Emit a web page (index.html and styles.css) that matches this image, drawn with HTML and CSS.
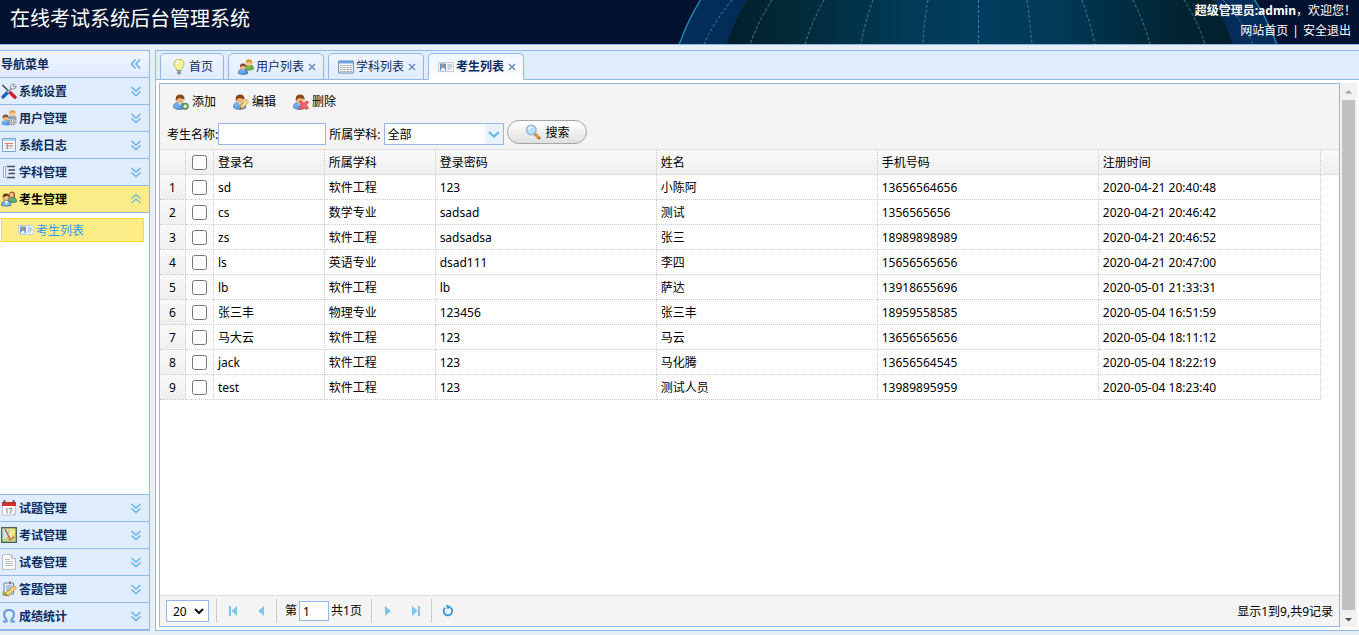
FILE: index.html
```html
<!DOCTYPE html>
<html lang="zh-CN">
<head>
<meta charset="utf-8">
<title>在线考试系统后台管理系统</title>
<link rel="stylesheet" href="styles.css">
</head>
<body>
<svg class="defs" aria-hidden="true">
  <defs>
    <linearGradient id="sea" x1="0" x2="1"><stop offset="0" stop-color="#021f2b"/><stop offset=".12" stop-color="#022836"/><stop offset=".35" stop-color="#013a55"/><stop offset=".5" stop-color="#023d5f"/><stop offset=".65" stop-color="#013a58"/><stop offset=".88" stop-color="#022433"/><stop offset="1" stop-color="#021f2b"/></linearGradient>
    <linearGradient id="blueShirt" x1="0" x2="1" y2="1"><stop offset="0" stop-color="#8ec4f6"/><stop offset="1" stop-color="#3a86dc"/></linearGradient>
  </defs>
  <symbol id="person" viewBox="0 0 16 16"><path d="M.5 13.500q-.2-4.500 4-5h4q4 .5 4.500 5Q10 15.500 6.500 15.500T.5 13.500z" fill="url(#blueShirt)" stroke="#3a74bd" stroke-width=".8"/><path d="M5.500 9l1.400 2 1.400-2z" fill="#e8f3ff"/><ellipse cx="7" cy="5.800" rx="3.600" ry="3.600" fill="#f0b67c"/><path d="M2.700 6.500Q2 .4 7 .4T11.500 6.200l-1.200-1.500q-2.500.2-3.800-1Q5.500 5 4 5l-.4 2z" fill="#85461b"/></symbol>
  <symbol id="add" viewBox="0 0 16 16"><use href="#person"/><circle cx="12.300" cy="12.300" r="3.200" fill="#68a957" stroke="#3d8232" stroke-width=".7"/><path d="M10.500 12.300h3.600M12.300 10.500v3.600" stroke="#fff" stroke-width="1.300"/></symbol>
  <symbol id="edit" viewBox="0 0 16 16"><use href="#person"/><path d="M7 15l.8-3.500L13 5.500l2.500 2.300-5.300 6z" fill="#ffd66b" stroke="#d08f30" stroke-width=".8"/><path d="M7 15l.5-2 1.400 1.300z" fill="#444"/><path d="M9 12.500l5-5.500" stroke="#fff2b8"/></symbol>
  <symbol id="remove" viewBox="0 0 16 16"><use href="#person"/><path d="M6 7.500l2.500-.5 2.300 2.300L13 7l2.700.8-2.200 3.200 2.200 3.300-2.700 1.200-2.200-2.300-2.300 2.300-2.700-1 2.400-3.500z" fill="#f66363" stroke="#dc4043" stroke-width=".7"/></symbol>
  <symbol id="users" viewBox="0 0 16 16"><path d="M7 9.500q0-3.500 3-3.500h2.500q3 0 3 4-3 1.500-6 1z" fill="#76b843" stroke="#3f8622" stroke-width=".7"/><circle cx="11" cy="3.700" r="3" fill="#f8c893"/><path d="M7.800 4Q7.500.3 11 .3T14.300 4l-.7 1-1-2-2.600.2z" fill="#e09a20"/><path d="M.3 14.500q0-4 3-4.500h3.400q3 .4 3 4.500-4 2.200-9.400 0z" fill="url(#blueShirt)" stroke="#2c6ab6" stroke-width=".7"/><circle cx="5" cy="8" r="2.800" fill="#efb681"/><path d="M2 8.500Q1.500 4.600 5 4.600T8.100 8l-1-.8L4 7z" fill="#88502a"/></symbol>
  <symbol id="usergear" viewBox="0 0 16 16"><path d="M7 9q0-3.500 3-3.500h3q2.500 0 2.500 4z" fill="#7aa3cf"/><circle cx="11.500" cy="3.500" r="3" fill="#f8c893"/><path d="M8 4Q8 .2 11.500.2T15 4l-1-1.500-4 .3z" fill="#e3a043"/><path d="M.3 14.500q0-4 3-4.500h3.400q3 .2 3 4.500-4 2-9.400 0z" fill="url(#blueShirt)"/><circle cx="4.500" cy="8" r="2.700" fill="#efb681"/><path d="M1.600 8.500Q1 4.600 4.500 4.600T7.600 8l-1-.8-3-.2z" fill="#88502a"/><circle cx="11.500" cy="11.300" r="3.300" fill="#d9d9d9" stroke="#959595" stroke-width="1.800" stroke-dasharray="1.700 .8"/><circle cx="11.500" cy="11.300" r="1.400" fill="#fff" stroke="#777" stroke-width=".8"/></symbol>
  <symbol id="group" viewBox="0 0 16 16"><path d="M7.500 9q0-3 3-3H12q3.500 0 3.500 5-4 1-7 0z" fill="#5eac77" stroke="#347b4a" stroke-width=".7"/><path d="M8 6V3q.3-2.600 3-2.600T14 3v3.800h-2z" fill="#a45724"/><circle cx="10.700" cy="4" r="2.200" fill="#f5c18b"/><path d="M.5 14.500q0-4.500 3-4.500h3.500q3 0 3 4.500-4 1.500-9.500 0z" fill="#80b5e8" stroke="#315f9b" stroke-width=".7"/><path d="M4 10l1.300 4 1.500-4z" fill="#fff"/><circle cx="5" cy="6.600" r="3" fill="#f5c18b" stroke="#9e602e" stroke-width=".6"/><path d="M1.600 6.500Q1.500 2.600 5 2.600T8.400 6L6 4.800z" fill="#683713"/></symbol>
  <symbol id="tools" viewBox="0 0 16 16"><path d="M1.500 2L9 9.500" stroke="#3d444a" stroke-width="1.500"/><path d="M9 9.500l5 4.700" stroke="#d31c26" stroke-width="3.400" stroke-linecap="round"/><path d="M7 9l-5 5" stroke="#255fc4" stroke-width="3.200" stroke-linecap="round"/><path d="M6.500 9.500l4-4" stroke="#a3a8ad" stroke-width="2.400"/><path d="M13.800 1.200q-4.600-1-4.300 3l1.500 2q4 .4 4.300-3.200l-2.500.8-.5-1.300z" fill="#eee" stroke="#8b9095"/></symbol>
  <symbol id="log" viewBox="0 0 16 16"><path d="M1.500 1.500h13v13h-13z" fill="#fff" stroke="#7ba6d6"/><path d="M2 2h12v2H2z" fill="#b4d4f0"/><path d="M3 6.500h10M3 9h10M3 11.500h10M6 5v8M10 5v8" stroke="#b9c4cf" stroke-width=".8" fill="none"/><path d="M4 6.500h8M5 9h7M6.500 6v6" stroke="#f07f73" fill="none"/></symbol>
  <symbol id="list" viewBox="0 0 16 16"><path d="M2.500 2.500h2v11h-2z" fill="#fff" stroke="#a3a9b0"/><path d="M6 2.500h8M7.500 6h6.500M7.500 9.500h6.500M6 13.500h8" stroke="#434c59" stroke-width="1.300"/></symbol>
  <symbol id="card" viewBox="0 0 16 16"><path d="M.7 3.500h14.600v9H.7z" fill="#f8fbfd" stroke="#c2c9cf"/><path d="M2 4.500h6v7H2z" fill="#5b99d8"/><circle cx="5" cy="7" r="1.700" fill="#d88c4c"/><path d="M3 11.500q0-2.700 2-2.700t2 2.700z" fill="#fff"/><path d="M9.500 6h4.500M9.500 8h4.500M9.500 10h3" stroke="#91a5b8"/></symbol>
  <symbol id="table" viewBox="0 0 16 16"><path d="M.7 2h14.600v12H.7z" fill="#fff" stroke="#5d83b2"/><path d="M1 2h14v2.500H1z" fill="#6ca0df"/><path d="M2 6.500h12M2 8.500h12M2 10.500h12M2 12.500h12" stroke="#a3a8ae" stroke-dasharray="2.500 .7"/></symbol>
  <symbol id="bulb" viewBox="0 0 16 16"><path d="M5.500 10Q3 7.300 3 5q0-4.500 5-4.500T13 5q0 2.300-2.500 5l-.3 1.500H5.800z" fill="#f4f394" stroke="#b2b34c" stroke-width=".8"/><path d="M5.500 5Q5.500 2 8 2" stroke="#fffff0" stroke-width="1.800" fill="none"/><path d="M6 11h4v3.500l-1 1H7l-1-1z" fill="#78828a"/><path d="M6 12.500h4M6 14h4" stroke="#c9ced1" stroke-width=".6"/></symbol>
  <symbol id="calendar" viewBox="0 0 16 16"><path d="M1.500 3h13v12h-13z" fill="#fbfbfb" stroke="#c5c5c5"/><path d="M1 2h14v4H1z" fill="#dc2929"/><path d="M3.500.3v3M12.500.3v3" stroke="#555" stroke-width="2"/><path d="M5 9l1-.5v5M8 8.500h3l-2 5" fill="none" stroke="#858585"/><path d="M11 15l4-4v4z" fill="#ccc"/></symbol>
  <symbol id="map" viewBox="0 0 16 16"><path d="M.7.7h14.600v14.600H.7z" fill="#b9d889" stroke="#4c6250" stroke-width="1.300"/><path d="M1.500 2H7v5L2 12z" fill="#c4e2fb"/><path d="M8 2h6v8l-4-2z" fill="#f8dd58"/><path d="M1.500 12L14 4M10 2v12" stroke="#fff" stroke-width=".8"/><path d="M4 2l4 8 1 3 4-3" fill="none" stroke="#e54d35" stroke-width="1.300"/></symbol>
  <symbol id="page" viewBox="0 0 16 16"><path d="M1.500.7h9l4 4v10.600h-13z" fill="#fff" stroke="#b6b9c1"/><path d="M10.500.7v4h4" fill="#e4e7ec" stroke="#b6b9c1"/><path d="M4 5.500h5M4 7.500h8M4 9.500h8M4 11.500h8" stroke="#a8aaad" stroke-width=".8"/></symbol>
  <symbol id="note" viewBox="0 0 16 16"><path d="M3 2h9.500v11H3z" fill="#e4f0ff" stroke="#5a86bd"/><path d="M9 .3v3" stroke="#d44332" stroke-width="1.500"/><path d="M5 5h6M5 7h5M5 9h4" stroke="#7496bc"/><path d="M2 9.500l-1 5 8 1z" fill="#86b44c"/><path d="M4.500 14.500l.6-3L13 5l2.500 2-7.300 7z" fill="#ffd77b" stroke="#bd7b26" stroke-width=".8"/><path d="M4.500 14.500l.4-1.500 1.200 1z" fill="#444"/></symbol>
  <symbol id="omega" viewBox="0 0 16 16"><path d="M2 13.500h3.500v-2Q3 9.500 3 6.500 3 2 8 2t5 4.500q0 3-2.500 5v2H14" fill="none" stroke="#6798dc" stroke-width="2"/></symbol>
  <symbol id="search" viewBox="0 0 16 16"><path d="M9.500 9.500l4.500 4.500" stroke="#b76e2d" stroke-width="3" stroke-linecap="round"/><path d="M10 10l3.500 3.500" stroke="#f4b35d" stroke-width="1.200"/><circle cx="6.300" cy="6" r="4.800" fill="#b9e1fb" stroke="#8caed5" stroke-width="1.300"/><path d="M3.500 5.500Q4 3 7 3" fill="none" stroke="#fff" stroke-width="1.500"/></symbol>
  <symbol id="chev" viewBox="0 0 16 16"><path d="M3.500 4L8 8l4.500-4M3.500 8.500l4.500 4 4.500-4" fill="none" stroke="#65b1eb" stroke-width="1.500"/></symbol>
</svg>

<header class="top">
  <svg class="globe" viewBox="678 0 681 44" aria-hidden="true">
    <path d="M701-1Q688 20 679 45H1277Q1268 20 1254-1z" fill="#042c58"/>
    <path d="M747-1Q734 22 726 45H1233Q1225 20 1213-1z" fill="url(#sea)"/>
    <path d="M701-1Q688 20 679 45M1254-1Q1268 20 1277 45" fill="none" stroke="#2391bd" stroke-width="1.300"/>
    <path d="M732 0Q715 20 704 44M772 0Q759 20 750 44M824 0Q812 22 805 44M873 0Q865 22 861 44M928 0Q924 22 923 44M978.500 0V44M1027 0Q1030 22 1032 44M1082 0Q1090 22 1095 44M1133 0Q1144 22 1150 44M1184 0Q1197 20 1205 44M1223 0Q1242 20 1253 44" fill="none" stroke="#3e8097" stroke-dasharray="3 2"/>
  </svg>
  <h1 class="title">在线考试系统后台管理系统</h1>
  <div class="account">
    <div><strong>超级管理员:admin</strong>，欢迎您！</div>
    <div class="account-links"><a href="#">网站首页</a><span>|</span><a href="#">安全退出</a></div>
  </div>
</header>

<div class="workspace">
  <nav class="side">
    <div class="side-head"><span class="label">导航菜单</span><svg class="fold left"><use href="#chev"/></svg></div>
    <button class="group"><svg class="icon"><use href="#tools"/></svg><span class="label">系统设置</span><svg class="fold"><use href="#chev"/></svg></button>
    <button class="group"><svg class="icon"><use href="#usergear"/></svg><span class="label">用户管理</span><svg class="fold"><use href="#chev"/></svg></button>
    <button class="group"><svg class="icon"><use href="#log"/></svg><span class="label">系统日志</span><svg class="fold"><use href="#chev"/></svg></button>
    <button class="group"><svg class="icon"><use href="#list"/></svg><span class="label">学科管理</span><svg class="fold"><use href="#chev"/></svg></button>
    <button class="group open"><svg class="icon"><use href="#group"/></svg><span class="label">考生管理</span><svg class="fold up"><use href="#chev"/></svg></button>
    <div class="group-body"><a class="leaf" href="#"><svg class="icon"><use href="#card"/></svg><span class="label">考生列表</span></a></div>
    <button class="group"><svg class="icon"><use href="#calendar"/></svg><span class="label">试题管理</span><svg class="fold"><use href="#chev"/></svg></button>
    <button class="group"><svg class="icon"><use href="#map"/></svg><span class="label">考试管理</span><svg class="fold"><use href="#chev"/></svg></button>
    <button class="group"><svg class="icon"><use href="#page"/></svg><span class="label">试卷管理</span><svg class="fold"><use href="#chev"/></svg></button>
    <button class="group"><svg class="icon"><use href="#note"/></svg><span class="label">答题管理</span><svg class="fold"><use href="#chev"/></svg></button>
    <button class="group"><svg class="icon"><use href="#omega"/></svg><span class="label">成绩统计</span><svg class="fold"><use href="#chev"/></svg></button>
  </nav>

  <main class="main">
    <div class="tabs">
      <button class="tab"><svg class="icon"><use href="#bulb"/></svg>首页</button>
      <button class="tab"><svg class="icon"><use href="#users"/></svg>用户列表<svg class="close" viewBox="0 0 8 8"><path d="M1 1l6 6M7 1L1 7"/></svg></button>
      <button class="tab"><svg class="icon"><use href="#table"/></svg>学科列表<svg class="close" viewBox="0 0 8 8"><path d="M1 1l6 6M7 1L1 7"/></svg></button>
      <button class="tab active"><svg class="icon"><use href="#card"/></svg>考生列表<svg class="close" viewBox="0 0 8 8"><path d="M1 1l6 6M7 1L1 7"/></svg></button>
    </div>
    <div class="content">
      <section class="panel">
        <div class="toolbar">
          <div class="actions">
            <button class="action"><svg class="icon"><use href="#add"/></svg>添加</button>
            <button class="action"><svg class="icon"><use href="#edit"/></svg>编辑</button>
            <button class="action"><svg class="icon"><use href="#remove"/></svg>删除</button>
          </div>
          <form class="filters">
            <label for="name">考生名称:</label><input class="field" id="name" type="text">
            <label class="subject-label" for="subject">所属学科:</label>
            <span class="combo"><select id="subject"><option>全部</option></select><svg class="combo-arrow" viewBox="0 0 18 20"><path d="M4 8l5 4.500L14 8"/></svg></span>
            <button class="search" type="button"><svg class="icon"><use href="#search"/></svg><span class="label">搜索</span></button>
          </form>
        </div>
        <div class="grid">
          <table>
            <colgroup><col class="c-num"><col class="c-check"><col class="c-short"><col class="c-short"><col class="c-long"><col class="c-long"><col class="c-long"><col><col class="c-end"></colgroup>
            <thead><tr><th></th><th><input type="checkbox" aria-label="全选"></th><th>登录名</th><th>所属学科</th><th>登录密码</th><th>姓名</th><th>手机号码</th><th>注册时间</th><th></th></tr></thead>
            <tbody>
              <tr><td>1</td><td><input type="checkbox" aria-label="sd"></td><td>sd</td><td>软件工程</td><td>123</td><td>小陈阿</td><td>13656564656</td><td>2020-04-21 20:40:48</td><td></td></tr>
              <tr><td>2</td><td><input type="checkbox" aria-label="cs"></td><td>cs</td><td>数学专业</td><td>sadsad</td><td>测试</td><td>1356565656</td><td>2020-04-21 20:46:42</td><td></td></tr>
              <tr><td>3</td><td><input type="checkbox" aria-label="zs"></td><td>zs</td><td>软件工程</td><td>sadsadsa</td><td>张三</td><td>18989898989</td><td>2020-04-21 20:46:52</td><td></td></tr>
              <tr><td>4</td><td><input type="checkbox" aria-label="ls"></td><td>ls</td><td>英语专业</td><td>dsad111</td><td>李四</td><td>15656565656</td><td>2020-04-21 20:47:00</td><td></td></tr>
              <tr><td>5</td><td><input type="checkbox" aria-label="lb"></td><td>lb</td><td>软件工程</td><td>lb</td><td>萨达</td><td>13918655696</td><td>2020-05-01 21:33:31</td><td></td></tr>
              <tr><td>6</td><td><input type="checkbox" aria-label="张三丰"></td><td>张三丰</td><td>物理专业</td><td>123456</td><td>张三丰</td><td>18959558585</td><td>2020-05-04 16:51:59</td><td></td></tr>
              <tr><td>7</td><td><input type="checkbox" aria-label="马大云"></td><td>马大云</td><td>软件工程</td><td>123</td><td>马云</td><td>13656565656</td><td>2020-05-04 18:11:12</td><td></td></tr>
              <tr><td>8</td><td><input type="checkbox" aria-label="jack"></td><td>jack</td><td>软件工程</td><td>123</td><td>马化腾</td><td>13656564545</td><td>2020-05-04 18:22:19</td><td></td></tr>
              <tr><td>9</td><td><input type="checkbox" aria-label="test"></td><td>test</td><td>软件工程</td><td>123</td><td>测试人员</td><td>13989895959</td><td>2020-05-04 18:23:40</td><td></td></tr>
            </tbody>
          </table>
        </div>
        <footer class="pager">
          <span class="size"><select aria-label="每页记录数"><option>20</option></select><svg class="size-arrow" viewBox="0 0 10 8"><path d="M1 2l4 4 4-4"/></svg></span>
          <i class="sep"></i>
          <button class="pbtn" aria-label="首页"><svg class="icon" viewBox="0 0 16 16"><path d="M4 3h2v10H4zM12 3v10L6.500 8z"/></svg></button>
          <button class="pbtn" aria-label="上一页"><svg class="icon" viewBox="0 0 16 16"><path d="M11 3v10L5 8z"/></svg></button>
          <i class="sep"></i>
          <label class="pageno">第<input type="text" value="1" aria-label="页码">共1页</label>
          <i class="sep"></i>
          <button class="pbtn" aria-label="下一页"><svg class="icon" viewBox="0 0 16 16"><path d="M5 3v10l6-5z"/></svg></button>
          <button class="pbtn" aria-label="末页"><svg class="icon" viewBox="0 0 16 16"><path d="M4 3v10l5.500-5zM10 3h2v10h-2z"/></svg></button>
          <i class="sep"></i>
          <button class="pbtn" aria-label="刷新"><svg class="icon reload" viewBox="0 0 16 16"><path class="ring" d="M5.200 4.700a4.300 4.300 0 1 0 5.200-.2"/><path d="M6 1.500l5 2-3.500 3z"/></svg></button>
          <span class="summary label">显示1到9,共9记录</span>
        </footer>
      </section>
      <div class="scroll" aria-hidden="true">
        <svg viewBox="0 0 17 17"><path d="M5 10.500h7L8.500 7z" fill="#a3a3a3"/></svg>
        <div class="thumb"></div>
        <svg viewBox="0 0 17 17"><path d="M5 8h7l-3.500 3.500z" fill="#505050"/></svg>
      </div>
    </div>
  </main>
</div>
</body>
</html>
```

FILE: styles.css
```css
* { box-sizing: border-box; }
body {
  margin: 0;
  height: 100vh;
  display: flex;
  flex-direction: column;
  overflow: hidden;
  background: #e6eef8;
  color: #000;
  font-family: "Noto Sans", "Noto Sans CJK SC", sans-serif;
  font-size: 12px;
  line-height: 18px;
}
button, input, select { font: inherit; color: inherit; margin: 0; }
button { background: none; border: 0; padding: 0; white-space: nowrap; }
a { color: inherit; text-decoration: none; }
.defs { position: absolute; width: 0; height: 0; }
.icon { width: 16px; height: 16px; flex: none; }
.label { padding-top: 2px; }

.top {
  position: relative;
  flex: none;
  height: 45px;
  display: flex;
  justify-content: space-between;
  background: #031230;
  border-bottom: 1px solid #95b8e7;
  color: #fff;
}
.globe { position: absolute; right: 0; top: 0; height: 44px; }
.title { margin: 0; padding: 4px 10px; font-size: 20px; line-height: 30px; font-weight: 400; }
.account { position: relative; padding: 1px 8px 0 0; text-align: right; line-height: 20px; }
.account div:first-child { margin-right: -5px; }
.account-links { display: flex; justify-content: flex-end; gap: 4px; }

.workspace { flex: 1; min-height: 0; display: flex; gap: 5px; padding: 5px 0 4px; }

.side {
  width: 150px;
  flex: none;
  display: flex;
  flex-direction: column;
  border: 1px solid #95b8e7;
  border-left: 0;
  background: #fff;
  color: #0e2d5f;
  font-weight: 700;
}
.side-head, .group {
  flex: none;
  display: flex;
  align-items: center;
  gap: 2px;
  width: 100%;
  height: 27px;
  padding: 0 5px 0 1px;
  border-bottom: 1px solid #95b8e7;
  background: #e0ecff;
  font-weight: 700;
}
.side-head { background: linear-gradient(#eff5ff, #e0ecff); }
.group.open { background: #fbec88; color: #000; }
.group-body { flex: 1; min-height: 0; padding: 5px 5px 0 1px; border-bottom: 1px solid #95b8e7; }
.fold { width: 16px; height: 16px; margin-left: auto; }
.fold.left { transform: rotate(90deg); }
.fold.up { transform: rotate(180deg); opacity: .8; }
.leaf {
  display: flex;
  align-items: center;
  gap: 2px;
  height: 24px;
  padding-left: 16px;
  border: 1px solid #f8dc30;
  background: #fbec88;
  color: #3399f3;
  font-weight: 400;
}

.main {
  flex: 1;
  min-width: 0;
  display: flex;
  flex-direction: column;
  border: 1px solid #95b8e7;
  border-right: 0;
  background: #fff;
}
.tabs {
  flex: none;
  display: flex;
  gap: 4px;
  height: 29px;
  padding: 2px 4px 0;
  background: #e0ecff;
  border-bottom: 1px solid #95b8e7;
}
.tab {
  display: flex;
  align-items: center;
  gap: 2px;
  height: 27px;
  padding: 0 10px;
  border: 1px solid #95b8e7;
  border-radius: 5px 5px 0 0;
  background: linear-gradient(#eff5ff, #e0ecff);
  color: #0e2d5f;
}
.tab:not(:first-child) { padding: 0 7px 0 9px; }
.tab.active { background: linear-gradient(#eff5ff, #fff); border-bottom-color: #fff; font-weight: 700; }
.close { width: 8px; height: 8px; margin-left: 2px; fill: none; stroke: #5f86bf; stroke-width: 1.4; }

.content { flex: 1; min-height: 0; display: flex; padding: 3px 2px 3px 3px; }
.panel { flex: 1; min-width: 0; display: flex; flex-direction: column; border: 1px solid #95b8e7; }
.toolbar { flex: none; background: #f4f4f4; padding: 8px 6px 5px; }
.actions { display: flex; gap: 17px; padding-left: 7px; }
.action { display: flex; align-items: center; gap: 3px; height: 20px; }
.filters { display: flex; align-items: center; height: 24px; margin-top: 8px; padding-left: 1px; }
.filters label { padding-top: 6px; }
.field { width: 108px; height: 22px; padding: 0 3px; margin-top: 4px; border: 1px solid #95b8e7; background: #fff; }
.filters .subject-label { margin: 0 4px 0 3px; }
.combo { position: relative; width: 120px; height: 22px; margin-top: 4px; }
.combo select { appearance: none; width: 100%; height: 22px; padding: 2px 2px 0; border: 1px solid #95b8e7; border-radius: 0; background: #fff; }
.combo-arrow { position: absolute; right: 1px; top: 1px; width: 18px; height: 20px; background: #e9f2ff; pointer-events: none; }
.combo-arrow path { fill: none; stroke: #65b5ee; stroke-width: 2.2; }
.search {
  display: flex;
  align-items: center;
  justify-content: center;
  gap: 4px;
  width: 80px;
  height: 24px;
  margin-left: 3px;
  border: 1px solid #a5a5a5;
  border-radius: 12px;
  background: linear-gradient(#fff, #e0e0e0);
}

.grid { flex: 1; min-height: 0; border-top: 1px solid #ddd; background: #fff; overflow: hidden; }
.grid table { width: 100%; table-layout: fixed; border-collapse: separate; border-spacing: 0; }
.c-num { width: 26px; }
.c-check { width: 28px; }
.c-short { width: 9.4%; }
.c-long { width: 18.75%; }
.c-end { width: 18px; }
.grid th, .grid td { height: 25px; padding: 2px 4px 0; text-align: left; font-weight: 400; border-right: 1px dotted #ccc; border-bottom: 1px dotted #ccc; white-space: nowrap; }
.grid th { background: linear-gradient(#f9f9f9, #efefef); border-bottom: 1px solid #ddd; }
.grid tr > :nth-child(-n+2) { padding: 2px 0 0; text-align: center; }
.grid tr > :nth-child(2) { padding: 0; }
.grid tr > :last-child { border-right: 0; }
.grid td:last-child { border-bottom: 0; }
.grid td:first-child { background: linear-gradient(#f9f9f9, #efefef); }
.grid input { display: block; width: 15px; height: 15px; margin: 0 auto; }

.pager { flex: none; display: flex; align-items: center; height: 31px; padding: 0 6px; background: #f4f4f4; border-top: 1px solid #ddd; }
.size { position: relative; width: 43px; height: 22px; }
.size select { appearance: none; width: 100%; height: 22px; padding: 1px 6px 0; border: 1px solid #95b8e7; border-radius: 0; background: #fff; }
.size-arrow { position: absolute; right: 5px; top: 7px; width: 10px; height: 8px; fill: none; stroke: #111; stroke-width: 2; pointer-events: none; }
.sep { width: 1px; height: 24px; margin: 0 8px 0 7px; background: #ccc; }
.pbtn { width: 16px; height: 16px; }
.pbtn + .pbtn { margin-left: 12px; }
.pbtn .icon { display: block; fill: #84c3f0; }
.pbtn .reload { fill: #3398dc; }
.reload .ring { fill: none; stroke: #3398dc; stroke-width: 1.8; }
.pageno { display: flex; align-items: center; gap: 2px; padding-right: 2px; }
.pageno input { width: 30px; height: 20px; padding: 0 3px; border: 1px solid #95b8e7; background: #fff; }
.summary { margin-left: auto; }

.scroll { width: 17px; flex: none; display: flex; flex-direction: column; background: #f1f1f1; }
.scroll svg { width: 17px; height: 17px; flex: none; }
.thumb { flex: 1; margin: 0 2px; background: #c1c1c1; }
```
